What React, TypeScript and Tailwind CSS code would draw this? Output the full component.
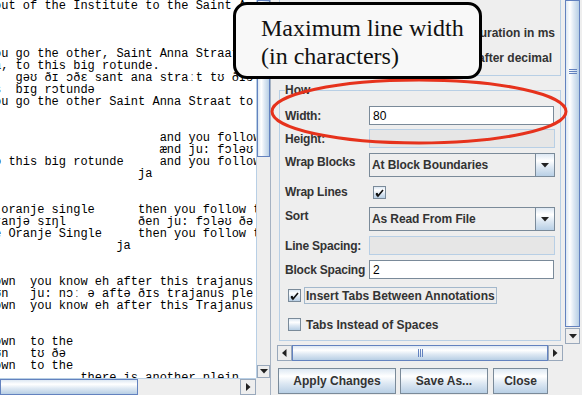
import React from 'react'

const GRAD_V = 'bg-[linear-gradient(to_bottom,#dde8f3_0%,#ffffff_30%,#dde8f3_60%,#b8cfe5_100%)]'
const GRAD_H = 'bg-[linear-gradient(to_right,#dde8f3_0%,#ffffff_30%,#dde8f3_60%,#b8cfe5_100%)]'

// pad a line so that `text` starts at column `col`
const at = (col: number, text: string, prefix = '') => prefix.padEnd(col) + text

const lines: string[] = [
  'out of the Institute to the Saint Anna Straat',
  '',
  '',
  '',
  'ou go the other, Saint Anna Straat to the',
  'a, to this big rotunde.',
  '   gəʊ ðɪ ɔðɛ sant ana straːt tʊ ðɪs bɪg',
  's  bɪg rɔtundə',
  'ou go the other Saint Anna Straat to',
  '',
  '',
  at(23, 'and you follow the'),
  at(23, 'ænd ju: fɔləʊ ðə'),
  at(23, 'and you follow the', 'o this big rotunde'),
  at(20, 'ja'),
  '',
  '',
  at(20, 'then you follow the', ' oranje single'),
  at(20, 'ðen ju: fɔləʊ ðə', 'ranjə sɪŋl'),
  at(20, 'then you follow the', 'e Oranje Single'),
  at(17, 'ja'),
  '',
  '',
  'own  you know eh after this trajanus plein',
  'ʊn   ju: nɔː ə aftə ðɪs trajanus pleːn',
  'own  you know eh after this Trajanus plein',
  '',
  '',
  'own  to the',
  'ʊn   tʊ ðə',
  'own  to the',
  at(12, 'there is another plein'),
]

function DownTri() {
  return (
    <svg width="8" height="5" viewBox="0 0 8 5">
      <polygon points="0,0 8,0 4,4.5" fill="#222" />
    </svg>
  )
}

function LeftTri() {
  return (
    <svg width="5" height="8" viewBox="0 0 5 8">
      <polygon points="4.5,0 4.5,8 0,4" fill="#222" />
    </svg>
  )
}

function RightTri() {
  return (
    <svg width="5" height="8" viewBox="0 0 5 8">
      <polygon points="0,0 0,8 4.5,4" fill="#222" />
    </svg>
  )
}

function CheckBox({ checked }: { checked?: boolean }) {
  return (
    <span className={`w-[13px] h-[13px] shrink-0 border border-[#7a8a99] flex items-end justify-start ${GRAD_V}`}>
      {checked && (
        <svg width="11" height="11" viewBox="0 0 11 11">
          <path d="M2.5 6 L4 9 L9 3" stroke="#111" strokeWidth="1.6" fill="none" />
          <path d="M2.5 6.5 L4 9" stroke="#111" strokeWidth="2.4" fill="none" />
        </svg>
      )}
    </span>
  )
}

function Label({ children, up }: { children: React.ReactNode; up?: boolean }) {
  return (
    <div
      className={`w-[84px] shrink-0 flex items-center text-[12px] font-bold tracking-[-0.2px] text-[#333] whitespace-nowrap ${
        up ? 'pb-[6px]' : ''
      }`}
    >
      {children}
    </div>
  )
}

function Field({ value, disabled, w }: { value?: string; disabled?: boolean; w: string }) {
  return (
    <div
      className={`${w} h-[19px] flex items-center pl-[3px] text-[12px] text-black border ${
        disabled ? 'bg-[#e6e6e6] border-[#b8cfe5]' : 'bg-white border-[#7a8a99]'
      }`}
    >
      {value}
    </div>
  )
}

function Combo({ value }: { value: string }) {
  return (
    <div className="w-[186px] h-[24px] flex border border-[#7a8a99] bg-[#eeeeee]">
      <div className="flex-1 flex items-center pl-[2px] text-[12px] font-bold tracking-[-0.1px] text-[#333]">{value}</div>
      <div className={`w-[19px] border-l border-[#7a8a99] flex items-center justify-center ${GRAD_V}`}>
        <DownTri />
      </div>
    </div>
  )
}

function Button({ children, w, ml }: { children: React.ReactNode; w: string; ml: string }) {
  return (
    <div
      className={`${w} ${ml} h-[26px] border border-[#7a8a99] flex items-center justify-center text-[12px] font-bold text-[#333] ${GRAD_V}`}
    >
      {children}
    </div>
  )
}

export default function App() {
  return (
    <div className="relative w-[582px] h-[395px] overflow-hidden flex bg-[#eeeeee] font-['Liberation_Sans',Arial,sans-serif]">
      {/* transcript text pane */}
      <div className="w-[271px] h-full flex flex-col border-r border-[#a6b2c2]">
        <div className="h-[378px] flex">
          <div className="w-[256px] bg-white overflow-hidden">
            <pre className="-ml-[6px] font-['Liberation_Mono','DejaVu_Sans_Mono',monospace] text-[12px] leading-[12px] text-black">
              {lines.join('\n')}
            </pre>
          </div>
          <div className="w-[14px] flex flex-col bg-[#eeeeee] border-l border-[#b8cfe5]">
            <div className={`h-[157px] border border-[#6382bf] ${GRAD_H}`} />
            <div className="flex-1" />
            <div className="h-[13px] border border-[#99a8bb] flex items-center justify-center">
              <DownTri />
            </div>
          </div>
        </div>
        <div className="h-[17px] flex">
          <div className="w-[256px] flex bg-[#eeeeee] border-t border-[#b8cfe5]">
            <div className={`w-[138px] border border-[#6382bf] ${GRAD_V}`} />
            <div className="flex-1" />
            <div className="w-[16px] border border-[#99a8bb] flex items-center justify-center">
              <RightTri />
            </div>
          </div>
          <div className="w-[14px] bg-[#eeeeee]" />
        </div>
      </div>

      {/* settings pane */}
      <div className="flex-1 flex flex-col">
        <div className="h-[344px] flex">
          <div className="ml-[5px] w-[288px] overflow-hidden">
            <div className="ml-[3px] w-[282px] h-[76px] border-x border-b border-[#b8cfe5] flex flex-col items-end pr-[5px] text-[12px] font-bold text-[#333]">
              <div className="mt-[25px] h-[16px] leading-[16px] whitespace-nowrap">Show Duration in ms</div>
              <div className="mt-[9px] mr-[3px] h-[16px] leading-[16px] whitespace-nowrap">Digits after decimal</div>
            </div>
            <fieldset className="ml-[3px] mt-[7px] w-[282px] border border-[#b8cfe5] px-[5px] pt-[9px] pb-[7px]">
              <legend className="text-[12px] leading-[14px] font-bold text-[#333]">How</legend>
              <div className="flex flex-col">
                <div className="h-[19px] flex">
                  <Label>Width:</Label>
                  <Field value="80" w="w-[185px]" />
                </div>
                <div className="mt-[4px] h-[19px] flex">
                  <Label>Height:</Label>
                  <Field disabled w="w-[186px]" />
                </div>
                <div className="mt-[5px] h-[24px] flex">
                  <Label up>Wrap Blocks</Label>
                  <Combo value="At Block Boundaries" />
                </div>
                <div className="h-[30px] flex items-center">
                  <Label>Wrap Lines</Label>
                  <span className="ml-[4px]">
                    <CheckBox checked />
                  </span>
                </div>
                <div className="h-[24px] flex">
                  <Label up>Sort</Label>
                  <Combo value="As Read From File" />
                </div>
                <div className="mt-[5px] h-[19px] flex">
                  <Label>Line Spacing:</Label>
                  <Field disabled w="w-[186px]" />
                </div>
                <div className="mt-[5px] h-[19px] flex">
                  <Label>Block Spacing</Label>
                  <Field value="2" w="w-[185px]" />
                </div>
                <div className="mt-[8px] h-[17px] flex items-center pl-[3px]">
                  <CheckBox checked />
                  <span className="ml-[3px] h-[17px] flex items-center px-[1px] border border-[#a3b8cc] text-[12px] font-bold text-[#333]">
                    Insert Tabs Between Annotations
                  </span>
                </div>
                <div className="mt-[12px] h-[17px] flex items-center pl-[3px]">
                  <CheckBox />
                  <span className="ml-[3px] h-[17px] flex items-center px-[1px] border border-transparent text-[12px] font-bold text-[#333]">
                    Tabs Instead of Spaces
                  </span>
                </div>
              </div>
            </fieldset>
          </div>
          <div className="w-[16px] pl-[1px] flex flex-col bg-[#eeeeee]">
            <div className={`h-[327px] border border-[#6382bf] flex flex-col items-center pt-[68px] gap-[1px] ${GRAD_H}`}>
              <div className="w-[8px] h-[1px] bg-[#6382bf]" />
              <div className="w-[8px] h-[1px] bg-[#6382bf]" />
              <div className="w-[8px] h-[1px] bg-[#6382bf]" />
            </div>
            <div className="mt-[1px] h-[16px] border border-[#99a8bb] flex items-center justify-center">
              <DownTri />
            </div>
          </div>
        </div>

        <div className="ml-[6px] mt-[1px] w-[286px] h-[16px] flex bg-[#eeeeee]">
          <div className="w-[15px] border border-[#99a8bb] flex items-center justify-center">
            <LeftTri />
          </div>
          <div className={`w-[256px] border border-[#6382bf] flex items-center justify-center gap-[1px] ${GRAD_V}`}>
            <div className="w-[1px] h-[8px] bg-[#6382bf]" />
            <div className="w-[1px] h-[8px] bg-[#6382bf]" />
            <div className="w-[1px] h-[8px] bg-[#6382bf]" />
          </div>
          <div className="w-[15px] border border-[#99a8bb] flex items-center justify-center">
            <RightTri />
          </div>
        </div>

        <div className="mt-[7px] ml-[7px] flex">
          <Button w="w-[118px]" ml="ml-0">Apply Changes</Button>
          <Button w="w-[88px]" ml="ml-[4px]">Save As...</Button>
          <Button w="w-[55px]" ml="ml-[5px]">Close</Button>
        </div>
      </div>

      {/* annotation overlay */}
      <svg className="absolute left-0 top-0 pointer-events-none" width="582" height="395">
        <ellipse cx="419" cy="111.5" rx="147" ry="31.5" fill="none" stroke="#e6321c" strokeWidth="3" />
      </svg>
      <div className="absolute left-[233px] top-[2px] w-[249px] h-[77px] border-[3px] border-black rounded-[14px] bg-[#f8f8f8] pl-[25px] pt-[9px] font-['Liberation_Serif','Times_New_Roman',serif] text-[24px] leading-[28px] text-[#111]">
        <div>Maximum line width</div>
        <div>(in characters)</div>
      </div>
    </div>
  )
}
